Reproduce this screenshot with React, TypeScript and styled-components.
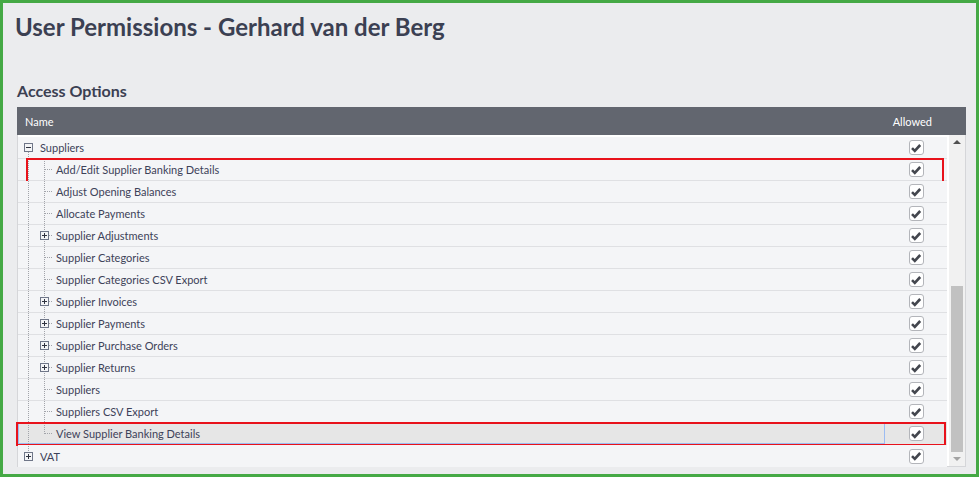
import React from "react";
import styled, { createGlobalStyle } from "styled-components";

interface PermissionRow {
  label: string;
  depth: number;
  hasChildren?: boolean;
  expanded?: boolean;
  last?: boolean;
  selected?: boolean;
  marked?: "first" | "second";
}

const rows: PermissionRow[] = [
  { label: "Suppliers", depth: 0, hasChildren: true, expanded: true },
  { label: "Add/Edit Supplier Banking Details", depth: 1, marked: "first" },
  { label: "Adjust Opening Balances", depth: 1 },
  { label: "Allocate Payments", depth: 1 },
  { label: "Supplier Adjustments", depth: 1, hasChildren: true },
  { label: "Supplier Categories", depth: 1 },
  { label: "Supplier Categories CSV Export", depth: 1 },
  { label: "Supplier Invoices", depth: 1, hasChildren: true },
  { label: "Supplier Payments", depth: 1, hasChildren: true },
  { label: "Supplier Purchase Orders", depth: 1, hasChildren: true },
  { label: "Supplier Returns", depth: 1, hasChildren: true },
  { label: "Suppliers", depth: 1 },
  { label: "Suppliers CSV Export", depth: 1 },
  { label: "View Supplier Banking Details", depth: 1, last: true, selected: true, marked: "second" },
  { label: "VAT", depth: 0, hasChildren: true, last: true },
];

const GlobalStyle = createGlobalStyle`
  html, body {
    margin: 0;
    padding: 0;
    background: #ebecee;
  }
  body {
    font-family: Lato, "Noto Sans", sans-serif;
  }
`;

function Expander({ x, expanded }: { x: number; expanded?: boolean }) {
  return (
    <g>
      <rect x={x + 4.5} y={6.5} width={8} height={8} fill="#f3f4f6" stroke="#6f7688" />
      <line x1={x + 6} y1={10.5} x2={x + 11} y2={10.5} stroke="#2f3340" />
      {!expanded && <line x1={x + 8.5} y1={8} x2={x + 8.5} y2={13} stroke="#2f3340" />}
    </g>
  );
}

function TreeGuides({ row }: { row: PermissionRow }) {
  const width = (row.depth + 1) * 16;
  const dot = { stroke: "#a2a4aa", strokeDasharray: "1 1", shapeRendering: "crispEdges" as const };
  const own = row.depth * 16;
  return (
    <GuideSvg width={width} height={21} viewBox={`0 0 ${width} 21`}>
      {row.depth > 0 && <line x1={8.5} y1={0} x2={8.5} y2={21} {...dot} />}
      {row.depth === 0 && row.expanded && <line x1={8.5} y1={15} x2={8.5} y2={21} {...dot} />}
      {row.depth === 0 && row.last && <line x1={8.5} y1={0} x2={8.5} y2={6} {...dot} />}
      {row.depth > 0 && (
        <>
          <line x1={own + 8.5} y1={0} x2={own + 8.5} y2={row.last ? 10.5 : 21} {...dot} />
          <line x1={own + 9} y1={10.5} x2={own + 17} y2={10.5} {...dot} />
        </>
      )}
      {row.hasChildren && <Expander x={own} expanded={row.expanded} />}
    </GuideSvg>
  );
}

function CheckBox() {
  return (
    <Box>
      <svg width="12" height="12" viewBox="0 0 12 12">
        <path d="M2 6.1 L4.8 8.9 L10.2 3" fill="none" stroke="#43464e" strokeWidth="2.6" />
      </svg>
    </Box>
  );
}

export default function App() {
  return (
    <Page>
      <GlobalStyle />
      <Title>User Permissions - Gerhard van der Berg</Title>
      <SectionTitle>Access Options</SectionTitle>
      <Grid>
        <HeaderRow>
          <HeaderName>Name</HeaderName>
          <HeaderAllowed>Allowed</HeaderAllowed>
        </HeaderRow>
        <Body>
          <RowList>
            {rows.map((row, i) => (
              <Row key={i} $selected={row.selected}>
                <NameCell $focused={row.selected}>
                  <TreeGuides row={row} />
                  <Label>{row.label}</Label>
                </NameCell>
                <AllowedCell>
                  <CheckBox />
                </AllowedCell>
                {row.marked === "first" && <Marker $top={-1} $left={8} $right={3} $bottom={-3} />}
                {row.marked === "second" && <Marker $top={-1} $left={-2} $right={1} $bottom={-2} />}
              </Row>
            ))}
          </RowList>
          <ScrollTrack>
            <Arrow $up />
            <TrackSpace>
              <Thumb />
            </TrackSpace>
            <Arrow />
          </ScrollTrack>
        </Body>
      </Grid>
    </Page>
  );
}

const Page = styled.div`
  width: 979px;
  height: 477px;
  box-sizing: border-box;
  border: 3px solid #45a945;
  background: #ebecee;
  padding-left: 14px;
  overflow: hidden;
`;

const Title = styled.h1`
  margin: 9px 0 0 -2px;
  font-size: 24px;
  line-height: 30px;
  font-weight: 700;
  color: #3b4052;
`;

const SectionTitle = styled.h2`
  margin: 39px 0 0 0;
  font-size: 16px;
  line-height: 19px;
  font-weight: 700;
  color: #3b4052;
`;

const Grid = styled.div`
  margin-top: 7px;
  width: 949px;
`;

const HeaderRow = styled.div`
  display: flex;
  align-items: center;
  height: 28px;
  background: #62666f;
  color: #ffffff;
  font-size: 11px;
`;

const HeaderName = styled.div`
  flex: 1;
  padding-left: 8px;
`;

const HeaderAllowed = styled.div`
  width: 81px;
  padding-right: 34px;
  box-sizing: border-box;
  text-align: right;
`;

const Body = styled.div`
  display: flex;
  height: 332px;
  box-sizing: border-box;
  padding-top: 2px;
  background: #ffffff;
  border: 1px solid #d5d6d9;
  border-top: none;
`;

const RowList = styled.div`
  width: 929px;
  background: #f4f5f7;
`;

const Row = styled.div<{ $selected?: boolean }>`
  position: relative;
  display: flex;
  height: 22px;
  box-sizing: border-box;
  border-bottom: 1px solid #dfe0e3;
  background: ${({ $selected }) => ($selected ? "#e6e6e6" : "#f4f5f7")};
  &:last-child {
    border-bottom: none;
  }
`;

const NameCell = styled.div<{ $focused?: boolean }>`
  display: flex;
  align-items: center;
  width: 867px;
  box-sizing: border-box;
  padding-left: 1px;
  border: 1px solid ${({ $focused }) => ($focused ? "#9cbcf2" : "transparent")};
`;

const GuideSvg = styled.svg`
  flex: none;
  display: block;
`;

const Label = styled.span`
  margin-left: 4px;
  font-size: 11px;
  color: #3d4259;
  white-space: nowrap;
`;

const AllowedCell = styled.div`
  width: 62px;
  display: flex;
  align-items: center;
  justify-content: center;
`;

const Box = styled.div`
  width: 15px;
  height: 15px;
  box-sizing: border-box;
  border: 1px solid #b3b5ba;
  border-radius: 3px;
  background: #ffffff;
  display: flex;
  align-items: center;
  justify-content: center;
`;

const Marker = styled.div<{ $top: number; $left: number; $right: number; $bottom: number }>`
  position: absolute;
  top: ${({ $top }) => $top}px;
  left: ${({ $left }) => $left}px;
  right: ${({ $right }) => $right}px;
  bottom: ${({ $bottom }) => $bottom}px;
  border: 2px solid #e8121b;
  pointer-events: none;
`;

const ScrollTrack = styled.div`
  width: 17px;
  margin-left: 2px;
  margin-top: -2px;
  background: #f1f1f1;
  display: flex;
  flex-direction: column;
`;

const TrackSpace = styled.div`
  flex: 1;
  display: flex;
  flex-direction: column;
  justify-content: flex-end;
  padding: 0 2px;
`;

const Thumb = styled.div`
  height: 166px;
  background: #c1c1c1;
`;

const Arrow = styled.div<{ $up?: boolean }>`
  height: 14px;
  display: flex;
  align-items: center;
  justify-content: center;
  &::before {
    content: "";
    border-left: 4px solid transparent;
    border-right: 4px solid transparent;
    ${({ $up }) =>
      $up ? "border-bottom: 4px solid #505050;" : "border-top: 4px solid #a3a3a3;"}
  }
`;
